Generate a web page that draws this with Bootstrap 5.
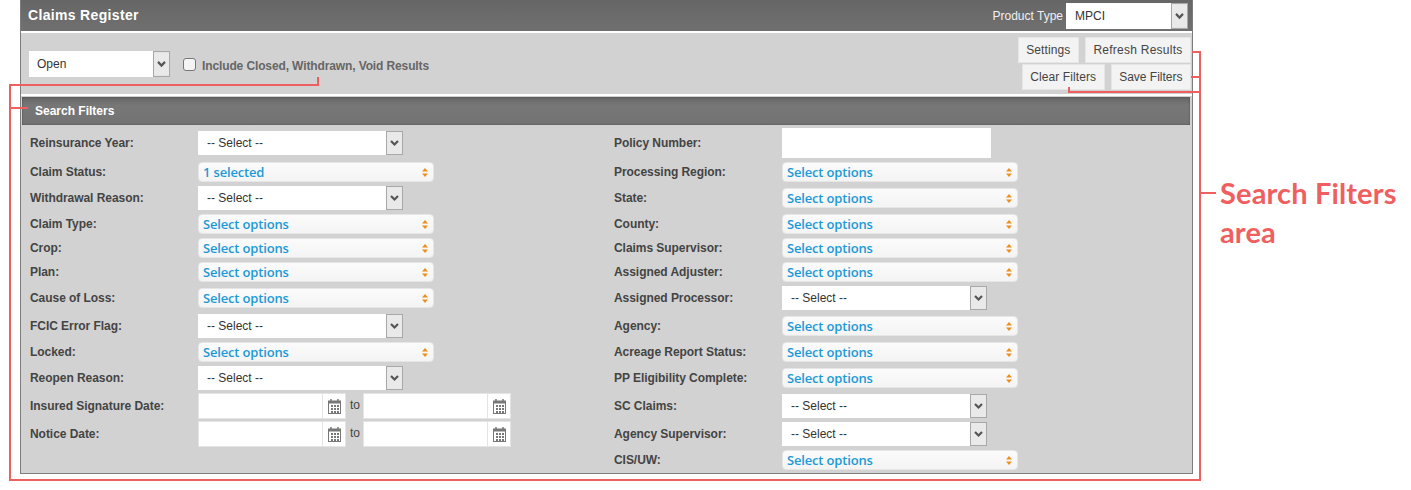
<!DOCTYPE html>
<html lang="en">
<head>
<meta charset="utf-8">
<title>Claims Register</title>
<link href="https://cdn.jsdelivr.net/npm/bootstrap@5.3.0/dist/css/bootstrap.min.css" rel="stylesheet">
<style>
html,body{height:490px;overflow:hidden;background:#fff}
body{position:relative;font-family:"Liberation Sans",Arial,sans-serif;font-size:12px;color:#444;padding-left:20px}
.reg-panel{width:1173px;height:474px;background:#d2d2d2;border:1px solid #7d7d7d;border-top:0}
.reg-head{height:33px;border-bottom:2px solid #fff;background:linear-gradient(#666,#707070);padding:0 4px 0 7px;color:#fff}
.reg-title{font-size:14px;font-weight:700;color:#fff;margin:0;letter-spacing:.33px}
.reg-ptype{color:#f0f0f0;margin-right:3px}
.reg-tools{height:63px;border-bottom:2px solid #fff;padding:4px 1px 4px 8px}
.reg-left{margin-top:14px}
.reg-check{width:13px;height:13px;margin:0 6px 0 13px;border-radius:0;border:1px solid #777;background-color:#f4f4f4;flex:none}
.reg-checktext{color:#666;font-weight:700;padding-top:3px;letter-spacing:-.12px}
.reg-btn{font-size:12px;line-height:14px;color:#444;background:#f3f3f3;border:1px solid #e6e6e6;border-radius:0;padding:5px 7.5px;letter-spacing:.1px}
.reg-btn:hover{background:#f3f3f3;color:#444;border-color:#e6e6e6}
.reg-btn-wide{letter-spacing:.25px}
.reg-btn-tight{letter-spacing:0}
.reg-btnrow{gap:6px}
.reg-btncol{gap:1px}
.reg-sel{font-size:12px;color:#333;border:1px solid transparent;border-radius:0;padding:0 20px 0 8px;height:24px;width:205px;line-height:22px;
 background-color:#fff;background-origin:border-box;background-position:right 0 top 0;background-size:17px 24px;background-repeat:no-repeat;
 background-image:url("data:image/svg+xml,%3Csvg xmlns='http://www.w3.org/2000/svg' width='17' height='24'%3E%3Crect x='.5' y='.5' width='16' height='23' fill='%23e9e9e9' stroke='%23a8a8a8'/%3E%3Cpath d='M5 10l3.5 3.5L12 10' fill='none' stroke='%23555' stroke-width='2.2'/%3E%3C/svg%3E")}
.reg-sel.tall{height:26px;background-size:17px 26px}
.reg-sel:focus{box-shadow:none;border-color:transparent}
.reg-sel-top{width:141px;padding-left:7px}
.reg-sel-prod{width:122px}
.reg-sub{height:28px;margin:1px 2px 0 1px;background:linear-gradient(#666,#777 30%,#737373);color:#fff;font-weight:700;padding-left:13px;box-shadow:inset 0 0 2px #444}
.reg-filters{padding-top:2px}
.reg-r32{height:32px}.reg-r26{height:26px}.reg-r22{height:22px}.reg-r30{height:30px}
.reg-cell-l{padding-left:9px}
.reg-cell-r{padding-left:7.5px}
.reg-label{width:168px;flex:none;font-weight:700;color:#444;margin:0;letter-spacing:-.05px}
.reg-multi{font-family:"Open Sans",sans-serif;font-size:13px;font-weight:600;letter-spacing:-.17px;color:#1c9ad6;width:236px;height:20px;line-height:18px;padding:0 5px 0 4px;background:linear-gradient(#fbfbfb,#f4f4f4);border:1px solid #e6e6e6;border-radius:4px}
.reg-multi:hover{background:#f8f8f8;color:#1c9ad6;border-color:#e6e6e6}
.reg-input{width:209px;height:30px;background:#fff;border:0;border-radius:0}
.reg-date{width:148px;flex:none}
.reg-date .form-control{height:26px;min-height:0;border:1px solid #e4e4e4;border-radius:0;padding:0 4px}
.reg-date .input-group-text{height:26px;width:24px;padding:0;justify-content:center;background:#fff;border:1px solid #e4e4e4;border-radius:0;margin-left:-1px}
.reg-to{width:13px;margin-left:4px;color:#444;flex:none;padding-bottom:3px}
.reg-marks{position:absolute;left:0;top:0;pointer-events:none}
.reg-note{position:absolute;left:1220px;top:173px;width:185px;font-family:Lato,sans-serif;font-weight:700;font-size:29px;letter-spacing:.15px;line-height:39px;color:#ef5f5f}
</style>
</head>
<body>
<div class="reg-panel">
  <div class="reg-head d-flex align-items-center justify-content-between">
    <h1 class="reg-title">Claims Register</h1>
    <div class="d-flex align-items-center">
      <span class="reg-ptype">Product Type</span>
      <select class="form-select reg-sel tall reg-sel-prod"><option>MPCI</option></select>
    </div>
  </div>
  <div class="reg-tools d-flex justify-content-between align-items-start">
    <div class="d-flex align-items-center reg-left">
      <select class="form-select reg-sel tall reg-sel-top"><option>Open</option></select>
      <input type="checkbox" class="form-check-input reg-check mt-0" aria-label="Include closed">
      <span class="reg-checktext">Include Closed, Withdrawn, Void Results</span>
    </div>
    <div class="d-flex flex-column align-items-end reg-btncol">
      <div class="d-flex reg-btnrow"><button class="btn reg-btn">Settings</button><button class="btn reg-btn reg-btn-wide">Refresh Results</button></div>
      <div class="d-flex reg-btnrow"><button class="btn reg-btn">Clear Filters</button><button class="btn reg-btn reg-btn-tight">Save Filters</button></div>
    </div>
  </div>
  <div class="reg-sub d-flex align-items-center">Search Filters</div>
  <div class="reg-filters" id="f"></div>
</div>
<svg class="reg-marks" width="1411" height="490" fill="none" stroke="#ee5f5f" stroke-width="2" aria-hidden="true">
  <path d="M318 77V85H10V480H1200V52H1192M10 108H28M1191 77H1200M1069 87V92H1200M1200 193H1216"/>
</svg>
<div class="reg-note">Search Filters area</div>
<script>
const cal='<svg width="13" height="15" viewBox="0 0 13 15"><path d="M3 0v3M10 0v3" stroke="#777" stroke-width="1.5"/><rect x=".5" y="2" width="12" height="12.5" fill="#fff" stroke="#777"/><rect x="1" y="2" width="11" height="2.5" fill="#777"/><path d="M3 6h2v2H3zM6 6h2v2H6zM9 6h2v2H9zM3 9h2v2H3zM6 9h2v2H6zM9 9h2v2H9zM3 12h2v2H3zM6 12h2v2H6zM9 12h2v2H9z" fill="#777"/></svg>';
const updown='<svg width="6" height="9" viewBox="0 0 6 9"><path d="M3 0L6 3.5H0zM0 5.5h6L3 9z" fill="#ee8f1c"/></svg>';
const sel=t=>`<select class="form-select reg-sel"><option>${t||'-- Select --'}</option></select>`;
const mul=t=>`<button class="btn reg-multi d-flex align-items-center justify-content-between"><span>${t||'Select options'}</span>${updown}</button>`;
const dt=()=>`<div class="input-group flex-nowrap reg-date"><input class="form-control" aria-label="Date"><span class="input-group-text">${cal}</span></div>`;
const dates=()=>`<div class="d-flex align-items-center">${dt()}<span class="reg-to">to</span>${dt()}</div>`;
const inp='<input class="form-control reg-input" aria-label="Policy number">';
const rows=[
['r32','Reinsurance Year:',sel(),'Policy Number:',inp],
['r26','Claim Status:',mul('1 selected'),'Processing Region:',mul()],
['r26','Withdrawal Reason:',sel(),'State:',mul()],
['r26','Claim Type:',mul(),'County:',mul()],
['r22','Crop:',mul(),'Claims Supervisor:',mul()],
['r26','Plan:',mul(),'Assigned Adjuster:',mul()],
['r26','Cause of Loss:',mul(),'Assigned Processor:',sel()],
['r30','FCIC Error Flag:',sel(),'Agency:',mul()],
['r22','Locked:',mul(),'Acreage Report Status:',mul()],
['r30','Reopen Reason:',sel(),'PP Eligibility Complete:',mul()],
['r26','Insured Signature Date:',dates(),'SC Claims:',sel()],
['r30','Notice Date:',dates(),'Agency Supervisor:',sel()],
['r22','','','CIS/UW:',mul()]];
document.getElementById('f').innerHTML=rows.map(r=>`<div class="row g-0 reg-${r[0]}"><div class="col-6 reg-cell-l d-flex align-items-center"><label class="reg-label">${r[1]}</label>${r[2]}</div><div class="col-6 reg-cell-r d-flex align-items-center"><label class="reg-label">${r[3]}</label>${r[4]}</div></div>`).join('');
</script>
<script src="https://cdn.jsdelivr.net/npm/bootstrap@5.3.0/dist/js/bootstrap.bundle.min.js"></script>
</body>
</html>
